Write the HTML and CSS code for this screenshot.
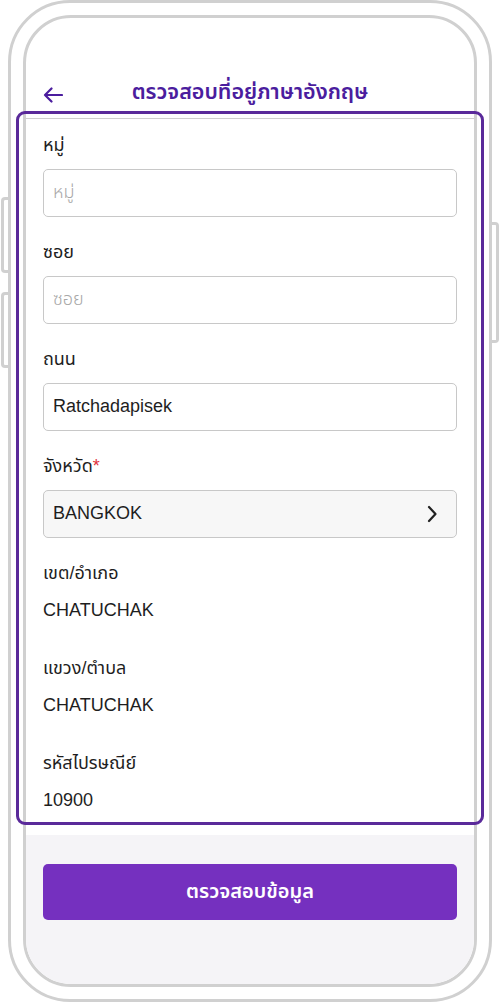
FILE: index.html
```html
<!DOCTYPE html>
<html lang="th">
  <head>
    <meta charset="UTF-8" />
    <meta name="viewport" content="width=device-width, initial-scale=1.0" />
    <title>ตรวจสอบที่อยู่ภาษาอังกฤษ</title>
    <link rel="stylesheet" href="styles.css">
  </head>
  <body>
    <div class="device">
      <span class="side-btn left top"></span>
      <span class="side-btn left bottom"></span>
      <span class="side-btn right"></span>

      <div class="phone">
        <div class="screen">
          <div class="header">
            <svg class="back" width="20" height="16" viewBox="0 0 20 16">
              <path d="M19 8H2M8.5 1.5L2 8l6.5 6.5" fill="none" stroke="#4b1d9e" stroke-width="2.2" stroke-linecap="round" stroke-linejoin="round" />
            </svg>
            <h1>ตรวจสอบที่อยู่ภาษาอังกฤษ</h1>
          </div>

          <form class="form">
            <div class="field">
              <label>หมู่</label>
              <input type="text" placeholder="หมู่" />
            </div>
            <div class="field">
              <label>ซอย</label>
              <input type="text" placeholder="ซอย" />
            </div>
            <div class="field">
              <label>ถนน</label>
              <input type="text" value="Ratchadapisek" />
            </div>
            <div class="field">
              <label>จังหวัด<span class="req">*</span></label>
              <div class="select">
                <span>BANGKOK</span>
                <svg width="12" height="18" viewBox="0 0 12 18">
                  <path d="M3 2l6.5 7L3 16" fill="none" stroke="#222" stroke-width="2.2" stroke-linecap="round" stroke-linejoin="round" />
                </svg>
              </div>
            </div>
            <div class="field info">
              <label>เขต/อำเภอ</label>
              <div class="value">CHATUCHAK</div>
            </div>
            <div class="field info">
              <label>แขวง/ตำบล</label>
              <div class="value">CHATUCHAK</div>
            </div>
            <div class="field">
              <label>รหัสไปรษณีย์</label>
              <div class="value">10900</div>
            </div>
          </form>

          <div class="footer">
            <button type="button">ตรวจสอบข้อมูล</button>
          </div>
        </div>
      </div>

      <!-- highlight around the form area -->
      <div class="highlight"></div>
    </div>
  </body>
</html>
```

FILE: styles.css
```css
body {
  margin: 0;
  padding: 0;
  font-family: "Liberation Sans", "Noto Sans Thai", "Noto Sans", sans-serif;
  color: #1e1e1e;
  background: #fff;
}
.device {
  position: relative;
  width: 500px;
  height: 1004px;
  padding: 0 8px;
  box-sizing: border-box;
}
.phone {
  height: 1002px;
  border: 3px solid #d0d0d0;
  border-radius: 62px;
  padding: 12px;
  box-sizing: border-box;
  background: #fff;
}
.screen {
  height: 100%;
  border: 3px solid #d0d0d0;
  border-radius: 48px;
  box-sizing: border-box;
  overflow: hidden;
  display: flex;
  flex-direction: column;
}
.side-btn {
  position: absolute;
  width: 7px;
  border: 3px solid #d0d0d0;
  box-sizing: border-box;
  background: #fff;
}
.side-btn.left {
  left: 1px;
  border-right: none;
  border-radius: 4px 0 0 4px;
}
.side-btn.left.top {
  top: 197px;
  height: 76px;
}
.side-btn.left.bottom {
  top: 292px;
  height: 76px;
}
.side-btn.right {
  right: 1px;
  top: 222px;
  height: 121px;
  border-left: none;
  border-radius: 0 4px 4px 0;
}
.header {
  height: 101px;
  border-bottom: 1px solid #cfcfcf;
  display: flex;
  align-items: flex-end;
  padding: 0 17px 12px;
  box-sizing: border-box;
}
.back {
  margin-bottom: 3px;
}
.header h1 {
  flex: 1;
  margin: 0 20px 0 0;
  text-align: center;
  font-size: 21.5px;
  line-height: 28px;
  font-weight: 600;
  color: #4b1d9e;
}
.form {
  padding: 14px 17px 0;
  flex: 1;
}
.field {
  display: flex;
  flex-direction: column;
  margin-bottom: 23px;
}
.field.info {
  margin-bottom: 34px;
}
.field label {
  font-size: 18px;
  line-height: 24px;
  font-weight: 400;
  margin-bottom: 12px;
}
.req {
  color: #e0323c;
}
.field input {
  height: 48px;
  border: 1px solid #c8c8c8;
  border-radius: 5px;
  padding: 0 9px;
  font-family: inherit;
  font-size: 18px;
  color: #1e1e1e;
  box-sizing: border-box;
  outline: none;
}
.field input::placeholder {
  color: #a8a8a8;
  font-weight: 300;
}
.select {
  height: 48px;
  border: 1px solid #c8c8c8;
  border-radius: 5px;
  background: #f7f7f7;
  padding: 0 18px 0 9px;
  display: flex;
  align-items: center;
  justify-content: space-between;
  font-size: 18px;
  box-sizing: border-box;
}
.value {
  font-size: 18px;
  line-height: 24px;
  margin-top: 1px;
}
.footer {
  height: 150px;
  background: #f5f4f7;
  padding: 29px 17px 0;
  box-sizing: border-box;
}
.footer button {
  width: 100%;
  height: 56px;
  border: none;
  border-radius: 5px;
  background: #7530bf;
  color: #fff;
  font-family: inherit;
  font-size: 20px;
  font-weight: 600;
}
.highlight {
  position: absolute;
  left: 16px;
  top: 111px;
  width: 468px;
  height: 714px;
  border: 3px solid #5a2a9a;
  border-radius: 9px;
  box-sizing: border-box;
  pointer-events: none;
}
```
